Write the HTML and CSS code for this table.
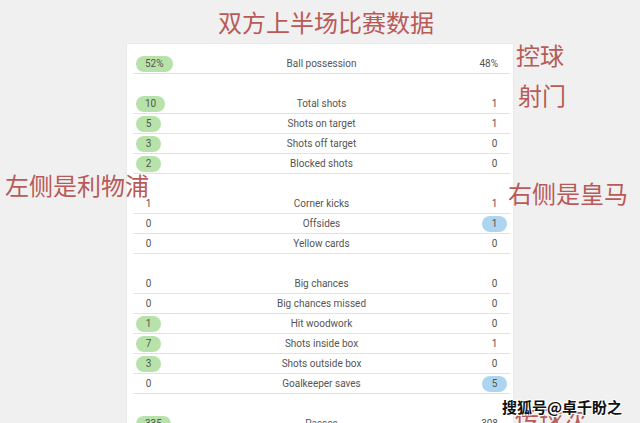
FILE: index.html
```html
<!DOCTYPE html>
<html lang="zh-CN">
<head>
    <meta charset="UTF-8">
    <title>双方上半场比赛数据</title>
    <link rel="stylesheet" href="styles.css">
</head>
<body>

    <!-- Title -->
    <h1 class="title">双方上半场比赛数据</h1>

    <!-- Stats card -->
    <div class="card">
        <div class="group">
            <div class="row"><span class="val win">52%</span><span class="label">Ball possession</span><span class="val">48%</span></div>
        </div>

        <div class="group">
            <div class="row"><span class="val win">10</span><span class="label">Total shots</span><span class="val">1</span></div>
            <div class="row"><span class="val win">5</span><span class="label">Shots on target</span><span class="val">1</span></div>
            <div class="row"><span class="val win">3</span><span class="label">Shots off target</span><span class="val">0</span></div>
            <div class="row"><span class="val win">2</span><span class="label">Blocked shots</span><span class="val">0</span></div>
        </div>

        <div class="group">
            <div class="row"><span class="val">1</span><span class="label">Corner kicks</span><span class="val">1</span></div>
            <div class="row"><span class="val">0</span><span class="label">Offsides</span><span class="val away">1</span></div>
            <div class="row"><span class="val">0</span><span class="label">Yellow cards</span><span class="val">0</span></div>
        </div>

        <div class="group">
            <div class="row"><span class="val">0</span><span class="label">Big chances</span><span class="val">0</span></div>
            <div class="row"><span class="val">0</span><span class="label">Big chances missed</span><span class="val">0</span></div>
            <div class="row"><span class="val win">1</span><span class="label">Hit woodwork</span><span class="val">0</span></div>
            <div class="row"><span class="val win">7</span><span class="label">Shots inside box</span><span class="val">1</span></div>
            <div class="row"><span class="val win">3</span><span class="label">Shots outside box</span><span class="val">0</span></div>
            <div class="row"><span class="val">0</span><span class="label">Goalkeeper saves</span><span class="val away">5</span></div>
        </div>

        <div class="group">
            <div class="row"><span class="val win">335</span><span class="label">Passes</span><span class="val">308</span></div>
        </div>
    </div>

    <!-- Notes written over the screenshot -->
    <div class="note note-left">左侧是利物浦</div>
    <div class="note note-ball">控球</div>
    <div class="note note-shots">射门</div>
    <div class="note note-right">右侧是皇马</div>
    <div class="note note-pass">传球次</div>

    <div class="mark">搜狐号@卓千盼之</div>

</body>
</html>
```

FILE: styles.css
```css
/* General Styles */
body {
    margin: 0;
    width: 640px;
    height: 423px;
    overflow: hidden;
    position: relative;
    background-color: #f0f0f0;
    font-family: Roboto, "Liberation Sans", sans-serif;
    color: #555;
}

.title {
    margin: 0;
    height: 44px;
    line-height: 44px;
    padding-left: 12px;
    text-align: center;
    font-family: "Noto Sans CJK SC", sans-serif;
    font-size: 24px;
    font-weight: normal;
    color: #b85a58;
}

/* Stats card */
.card {
    width: 386px;
    margin-left: 127px;
    padding-top: 10px;
    background-color: #fff;
    box-shadow: 0 0 2px rgba(0, 0, 0, 0.08);
}

.group + .group {
    margin-top: 20px;
}

.row {
    display: grid;
    grid-template-columns: 80px 1fr 80px;
    align-items: center;
    box-sizing: border-box;
    height: 20px;
    margin: 0 3px 0 6px;
    padding: 0 3px;
    border-bottom: 1px solid #e3e3e3;
    font-size: 10px;
}

.label {
    text-align: center;
    color: #555;
}

.val {
    min-width: 25px;
    height: 16px;
    line-height: 16px;
    padding: 0 9px;
    box-sizing: border-box;
    border-radius: 8px;
    text-align: center;
    justify-self: start;
}

.val:last-child {
    justify-self: end;
}

.val.win {
    background-color: #b7e2a9;
}

.val.away {
    background-color: #aed5ef;
}

/* Annotations */
.note {
    position: absolute;
    font-family: "Noto Sans CJK SC", sans-serif;
    font-size: 24px;
    line-height: 28px;
    color: #b85a58;
    white-space: nowrap;
}

.note-left {
    left: 5px;
    top: 171px;
}

.note-ball {
    left: 516px;
    top: 41px;
}

.note-shots {
    left: 518px;
    top: 81px;
}

.note-right {
    left: 508px;
    top: 179px;
}

.note-pass {
    left: 515px;
    top: 404px;
}

.mark {
    position: absolute;
    left: 502px;
    top: 397px;
    font-family: "Noto Sans CJK SC", sans-serif;
    font-size: 15px;
    line-height: 20px;
    font-weight: bold;
    color: #111;
    text-shadow: 1px 1px 0 #fff, -1px -1px 0 #fff, 1px -1px 0 #fff, -1px 1px 0 #fff;
}
```
